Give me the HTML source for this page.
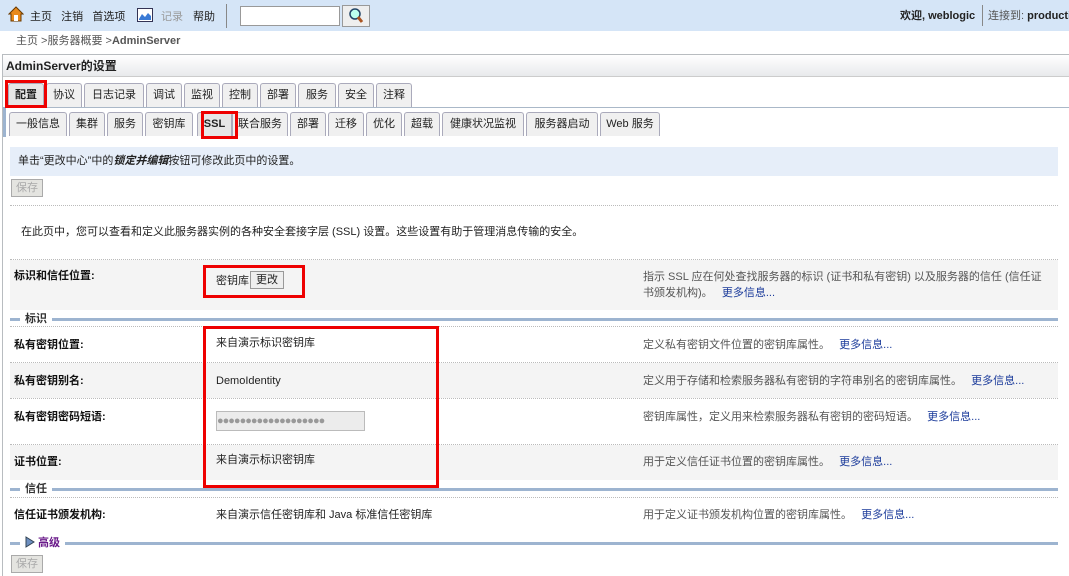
<!DOCTYPE html>
<html style="width:1069px;height:576px;overflow:hidden"><head><meta charset="utf-8"><style>
*{margin:0;padding:0;box-sizing:border-box}
body{width:1069px;height:576px;overflow:hidden;background:#fff;font-family:"Liberation Sans","Noto Sans CJK SC",sans-serif;font-size:11px;line-height:14px;color:#222;position:relative}
.a{position:absolute;white-space:nowrap}
.hdr{left:0;top:0;width:1069px;height:31px;background:#d5e5f7}
.tab{position:absolute;height:24px;border:1px solid #aab;border-bottom:none;border-radius:3px 3px 0 0;background:#f0f0f0;font-size:11px;text-align:center;line-height:22px;color:#222}
.red{position:absolute;border:3px solid #e00}
.dot{position:absolute;left:10px;width:1048px;border-top:1px dotted #bbb}
.gray{position:absolute;left:10px;width:1048px;background:#f4f4f4}
.bl{position:absolute;left:10px;width:1048px;height:3px;background:#9db4d0}
.lab{font-weight:bold;font-size:11px;color:#111}
.desc{color:#555;font-size:11px}
.more{color:#1a3a9a}
.btn{position:absolute;border:1px solid #aaa;background:#e4e4e0;color:#aaa;font-size:11px;text-align:center}
.sec{position:absolute;background:#fff;padding:0 5px;font-weight:bold;color:#333;font-size:11px}
</style></head><body>
<div class="a hdr"></div>
<svg class="a" style="left:8px;top:6px" width="16" height="16" viewBox="0 0 16 16"><path d="M1 8 L8 1 L15 8 L13 8 L13 15 L3 15 L3 8Z" fill="#e98a1c" stroke="#6a3a00" stroke-width="1"/><rect x="6" y="9" width="4" height="6" fill="#fff"/></svg>
<div class="a" style="left:30px;top:10px">主页 &nbsp;&nbsp;注销 &nbsp;&nbsp;首选项</div>
<svg class="a" style="left:137px;top:8px" width="16" height="14"><rect x="0.5" y="0.5" width="15" height="13" fill="#fff" stroke="#335"/><path d="M2 11 L5 6 L8 9 L11 5 L14 8 L14 12 L2 12Z" fill="#3a7ad5"/></svg>
<div class="a" style="left:161px;top:10px;color:#999">记录</div>
<div class="a" style="left:193px;top:10px">帮助</div>
<div class="a" style="left:226px;top:4px;width:1px;height:24px;background:#888"></div>
<div class="a" style="left:240px;top:6px;width:100px;height:20px;background:#fff;border:1px solid #999"></div>
<div class="a" style="left:342px;top:5px;width:28px;height:22px;background:#eee;border:1px solid #999"><svg width="26" height="20"><circle cx="12" cy="8" r="5" fill="#bfe" stroke="#246" stroke-width="1.5"/><path d="M15 11 L19 16" stroke="#a52" stroke-width="3"/></svg></div>
<div class="a" style="left:900px;top:9px;font-weight:bold">欢迎, weblogic</div>
<div class="a" style="left:982px;top:5px;width:1px;height:21px;background:#888"></div>
<div class="a" style="left:988px;top:9px;color:#555">连接到: <b style="color:#222">production</b></div>
<div class="a" style="left:16px;top:34px;color:#555">主页 &gt;服务器概要 &gt;<b>AdminServer</b></div>
<div class="a" style="left:2px;top:54px;width:1067px;height:530px;border:1px solid #b8bcc0;border-right:none"></div>
<div class="a" style="left:3px;top:55px;width:1066px;height:22px;background:linear-gradient(#fff,#e8eaec);border-bottom:1px solid #ccc"></div>
<div class="a" style="left:6px;top:59px;font-weight:bold;font-size:12px">AdminServer的设置</div>
<div class="tab" style="left:8px;top:83px;width:36px;background:#e6e6e6;font-weight:bold">配置</div>
<div class="tab" style="left:46px;top:83px;width:36px">协议</div>
<div class="tab" style="left:84px;top:83px;width:60px">日志记录</div>
<div class="tab" style="left:146px;top:83px;width:36px">调试</div>
<div class="tab" style="left:184px;top:83px;width:36px">监视</div>
<div class="tab" style="left:222px;top:83px;width:36px">控制</div>
<div class="tab" style="left:260px;top:83px;width:36px">部署</div>
<div class="tab" style="left:298px;top:83px;width:38px">服务</div>
<div class="tab" style="left:338px;top:83px;width:36px">安全</div>
<div class="tab" style="left:376px;top:83px;width:36px">注释</div>
<div class="a" style="left:3px;top:107px;width:1066px;border-top:1px solid #aab8c8"></div>
<div class="a" style="left:3px;top:107px;width:3px;height:30px;background:#9db4d0"></div>
<div class="tab" style="left:9px;top:112px;width:58px">一般信息</div>
<div class="tab" style="left:69px;top:112px;width:36px">集群</div>
<div class="tab" style="left:107px;top:112px;width:36px">服务</div>
<div class="tab" style="left:145px;top:112px;width:48px">密钥库</div>
<div class="tab" style="left:197px;top:112px;width:35px;background:#e6e6e6;font-weight:bold">SSL</div>
<div class="tab" style="left:232px;top:112px;width:56px">联合服务</div>
<div class="tab" style="left:290px;top:112px;width:36px">部署</div>
<div class="tab" style="left:328px;top:112px;width:36px">迁移</div>
<div class="tab" style="left:366px;top:112px;width:36px">优化</div>
<div class="tab" style="left:404px;top:112px;width:36px">超载</div>
<div class="tab" style="left:442px;top:112px;width:82px">健康状况监视</div>
<div class="tab" style="left:526px;top:112px;width:72px">服务器启动</div>
<div class="tab" style="left:600px;top:112px;width:60px">Web 服务</div>
<div class="red" style="left:5px;top:80px;width:42px;height:28px"></div>
<div class="red" style="left:201px;top:111px;width:37px;height:28px"></div>
<div class="a" style="left:10px;top:147px;width:1048px;height:29px;background:#e6eef9"></div>
<div class="a" style="left:18px;top:154px">单击“更改中心”中的<b><i>锁定并编辑</i></b>按钮可修改此页中的设置。</div>
<div class="btn" style="left:11px;top:179px;width:32px;height:18px;line-height:16px">保存</div>
<div class="dot" style="top:205px"></div>
<div class="a" style="left:21px;top:225px">在此页中，您可以查看和定义此服务器实例的各种安全套接字层 (SSL) 设置。这些设置有助于管理消息传输的安全。</div>
<div class="dot" style="top:259px"></div>
<div class="gray" style="top:260px;height:50px"></div>
<div class="a lab" style="left:14px;top:269px">标识和信任位置:</div>
<div class="a" style="left:216px;top:274px">密钥库</div>
<div class="a" style="left:250px;top:271px;width:34px;height:18px;background:#eee;border:1px solid #999;text-align:center;line-height:16px">更改</div>
<div class="red" style="left:203px;top:265px;width:102px;height:33px"></div>
<div class="a desc" style="left:643px;top:269px;line-height:16px">指示 SSL 应在何处查找服务器的标识 (证书和私有密钥) 以及服务器的信任 (信任证<br>书颁发机构)。 &nbsp;&nbsp;<span class="more">更多信息...</span></div>
<div class="bl" style="top:318px"></div><div class="sec" style="left:20px;top:312px">标识</div>
<div class="dot" style="top:326px"></div>
<div class="a lab" style="left:14px;top:338px">私有密钥位置:</div>
<div class="a" style="left:216px;top:336px">来自演示标识密钥库</div>
<div class="a desc" style="left:643px;top:338px">定义私有密钥文件位置的密钥库属性。 &nbsp;&nbsp;<span class="more">更多信息...</span></div>
<div class="dot" style="top:362px"></div>
<div class="gray" style="top:363px;height:35px"></div>
<div class="a lab" style="left:14px;top:374px">私有密钥别名:</div>
<div class="a" style="left:216px;top:374px">DemoIdentity</div>
<div class="a desc" style="left:643px;top:374px">定义用于存储和检索服务器私有密钥的字符串别名的密钥库属性。 &nbsp;&nbsp;<span class="more">更多信息...</span></div>
<div class="dot" style="top:398px"></div>
<div class="a lab" style="left:14px;top:410px">私有密钥密码短语:</div>
<div class="a" style="left:216px;top:411px;width:149px;height:20px;background:#ececec;border:1px solid #bbb;color:#999;font-size:11px;line-height:18px;overflow:hidden;letter-spacing:-1px">●●●●●●●●●●●●●●●●●●●</div>
<div class="a desc" style="left:643px;top:410px">密钥库属性，定义用来检索服务器私有密钥的密码短语。 &nbsp;&nbsp;<span class="more">更多信息...</span></div>
<div class="dot" style="top:444px"></div>
<div class="gray" style="top:445px;height:35px"></div>
<div class="a lab" style="left:14px;top:455px">证书位置:</div>
<div class="a" style="left:216px;top:453px">来自演示标识密钥库</div>
<div class="a desc" style="left:643px;top:455px">用于定义信任证书位置的密钥库属性。 &nbsp;&nbsp;<span class="more">更多信息...</span></div>
<div class="red" style="left:203px;top:326px;width:236px;height:162px"></div>
<div class="bl" style="top:488px"></div><div class="sec" style="left:20px;top:482px">信任</div>
<div class="dot" style="top:497px"></div>
<div class="a lab" style="left:14px;top:508px">信任证书颁发机构:</div>
<div class="a" style="left:216px;top:508px">来自演示信任密钥库和 Java 标准信任密钥库</div>
<div class="a desc" style="left:643px;top:508px">用于定义证书颁发机构位置的密钥库属性。 &nbsp;&nbsp;<span class="more">更多信息...</span></div>
<div class="bl" style="top:542px"></div>
<div class="sec" style="left:20px;top:536px;color:#6a1a8a"><svg width="10" height="12" style="vertical-align:-2px"><path d="M1 1 L9 6 L1 11Z" fill="#6d8fc0" stroke="#345"/></svg> 高级</div>
<div class="btn" style="left:11px;top:555px;width:32px;height:18px;line-height:16px">保存</div>
</body></html>
